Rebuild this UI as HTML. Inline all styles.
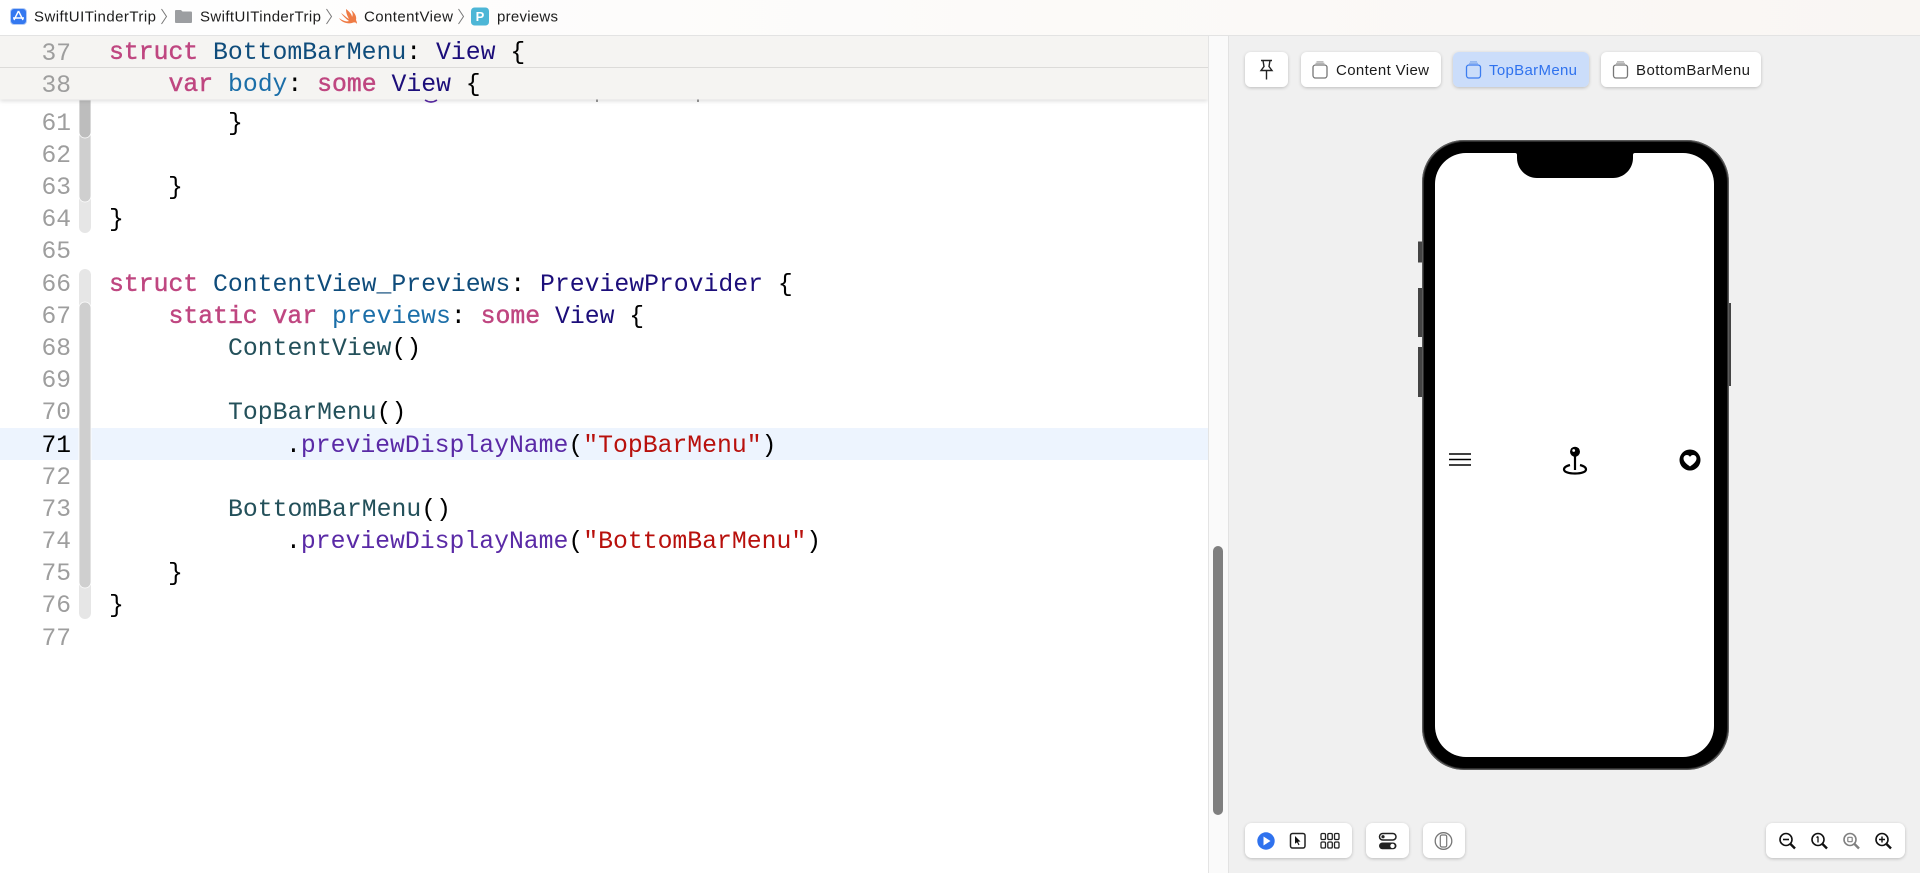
<!DOCTYPE html>
<html><head><meta charset="utf-8"><style>
html,body{margin:0;padding:0;background:#fff;width:1920px;height:873px;overflow:hidden}
svg{display:block;filter:blur(.3px)}
.c{font-family:"Liberation Mono",monospace;font-size:24.78px;fill:#000;white-space:pre}
.n{font-family:"Liberation Mono",monospace;font-size:24.6px;fill:#9e9e9e;text-anchor:end}
.u{font-family:"Liberation Sans",sans-serif;font-size:15px;fill:#1c1c1c}
.k{fill:#bf4680;stroke:#bf4680;stroke-width:.45}
.t{fill:#0f4c7b}.v{fill:#1c0e7a}.b{fill:#1b6ea8}.d{fill:#23505a}.m{fill:#5a2aa6}.s{fill:#b8100c}
</style></head><body>
<svg width="1920" height="873" viewBox="0 0 1920 873" xmlns="http://www.w3.org/2000/svg">
<defs>
<linearGradient id="top" x1="0" x2="1"><stop offset="0" stop-color="#fff"/><stop offset="1" stop-color="#f9f6f3"/></linearGradient>
<filter id="sh" x="-20%" y="-20%" width="140%" height="150%"><feDropShadow dx="0" dy="1" stdDeviation="1.5" flood-color="#000" flood-opacity=".22"/></filter>
<filter id="hs" x="0" y="0" width="100%" height="130%"><feDropShadow dx="0" dy="1.5" stdDeviation="2" flood-color="#000" flood-opacity=".14"/></filter>
</defs>

<!-- editor -->
<rect x="0" y="428" width="1208" height="32" fill="#edf4fe"/>
<g stroke="#fff" stroke-width=".8">
<path d="M79 100h12v127a6 6 0 0 1-12 0z" fill="#e6e6e6" stroke="none"/>
<path d="M79 100h12v96a6 6 0 0 1-12 0z" fill="#cfcfcf"/>
<path d="M79 100h12v32a6 6 0 0 1-12 0z" fill="#bdbdbd"/>
<path d="M79 275a6 6 0 0 1 12 0v338a6 6 0 0 1-12 0z" fill="#e6e6e6" stroke="none"/>
<path d="M79 308a6 6 0 0 1 12 0v274a6 6 0 0 1-12 0z" fill="#cfcfcf"/>
</g>

<g transform="translate(0,-1)">
<g class="n">
<text x="71" y="131">61</text><text x="71" y="163">62</text><text x="71" y="195">63</text>
<text x="71" y="227">64</text><text x="71" y="259">65</text><text x="71" y="292">66</text>
<text x="71" y="324">67</text><text x="71" y="356">68</text><text x="71" y="388">69</text>
<text x="71" y="420">70</text><text x="71" y="453" style="fill:#000">71</text><text x="71" y="485">72</text>
<text x="71" y="517">73</text><text x="71" y="549">74</text><text x="71" y="581">75</text>
<text x="71" y="613">76</text><text x="71" y="646">77</text>
</g>

<g class="c" xml:space="preserve">
<text x="228" y="131">}</text>
<text x="168" y="195">}</text>
<text x="109" y="227">}</text>
<text x="109" y="292"><tspan class="k">struct</tspan> <tspan class="t">ContentView_Previews</tspan>: <tspan class="v">PreviewProvider</tspan> {</text>
<text x="168.500" y="324"><tspan class="k">static</tspan> <tspan class="k">var</tspan> <tspan class="b">previews</tspan>: <tspan class="k">some</tspan> <tspan class="v">View</tspan> {</text>
<text x="228" y="356"><tspan class="d">ContentView</tspan>()</text>
<text x="228" y="420"><tspan class="d">TopBarMenu</tspan>()</text>
<text x="286" y="453">.<tspan class="m">previewDisplayName</tspan>(<tspan class="s">"TopBarMenu"</tspan>)</text>
<text x="228" y="517"><tspan class="d">BottomBarMenu</tspan>()</text>
<text x="286" y="549">.<tspan class="m">previewDisplayName</tspan>(<tspan class="s">"BottomBarMenu"</tspan>)</text>
<text x="168" y="581">}</text>
<text x="109" y="613">}</text>
</g>
</g>

<!-- sliver of hidden line -->
<path d="M425 100q6 4 12 0" stroke="#5a2aa6" stroke-width="1.600" fill="none"/>
<rect x="596" y="99" width="2" height="3" fill="#999"/>
<rect x="697" y="99" width="2" height="3" fill="#999"/>

<!-- sticky header -->
<g filter="url(#hs)"><rect x="0" y="35" width="1208" height="64.500" fill="#f5f4f2"/></g>
<rect x="0" y="67" width="1208" height="1" fill="#dcdbd9"/>
<rect x="0" y="35" width="1208" height="1" fill="#e2e1df"/>
<g transform="translate(0,-1)">
<g class="n"><text x="71" y="61">37</text><text x="71" y="93">38</text></g>
<g class="c" xml:space="preserve">
<text x="109" y="60"><tspan class="k">struct</tspan> <tspan class="t">BottomBarMenu</tspan>: <tspan class="v">View</tspan> {</text>
<text x="168.500" y="92"><tspan class="k">var</tspan> <tspan class="b">body</tspan>: <tspan class="k">some</tspan> <tspan class="v">View</tspan> {</text>
</g>
</g>

<!-- scrollbar -->
<rect x="1208" y="35" width="20" height="838" fill="#fafafa"/>
<rect x="1208" y="35" width="1" height="838" fill="#e4e4e4"/>
<rect x="1228" y="35" width="692" height="838" fill="#f0f0f0"/>
<rect x="1228" y="35" width="1" height="838" fill="#e2e2e2"/>
<rect x="1213" y="546" width="10" height="269" rx="5" fill="#7f7f7f"/>

<!-- breadcrumb -->
<rect x="0" y="0" width="1920" height="35" fill="url(#top)"/>
<rect x="0" y="35" width="1920" height="1" fill="#e3e3e3"/>
<rect x="10.500" y="8.500" width="16" height="16" rx="3.500" fill="#3478f0" stroke="#b6cdf5"/>
<path d="M18.500 11l-4.500 9M18.500 11l4.500 9M13 18h11" stroke="#fff" stroke-width="1.400" fill="none"/>
<text class="u" x="34" y="21.500" textLength="122" lengthAdjust="spacing">SwiftUITinderTrip</text>
<path d="M161.500 9l5 7.500-5 7.500" stroke="#777" fill="none"/>
<path d="M175 11a1 1 0 0 1 1-1h5l1.500 1.500h8.500a1 1 0 0 1 1 1v9.500a1 1 0 0 1-1 1h-15a1 1 0 0 1-1-1z" fill="#9c9ea1"/>
<text class="u" x="200" y="21.500" textLength="121" lengthAdjust="spacing">SwiftUITinderTrip</text>
<path d="M326.500 9l5 7.500-5 7.500" stroke="#777" fill="none"/>
<path d="M346 9c4 3 6 6 6 8 1-2 1-4-1-7 3 2 6 6 5 10 1 2 1 3 1 4-1-2-3-2-5-1-4 1-10 0-13-5 4 3 8 4 10 3-3-2-6-5-8-8 3 2 6 5 8 6-1-2-3-5-3-10z" fill="#ef7b45"/>
<text class="u" x="364" y="21.500" textLength="89" lengthAdjust="spacing">ContentView</text>
<path d="M458.500 9l5 7.500-5 7.500" stroke="#777" fill="none"/>
<rect x="471" y="7.500" width="18" height="18" rx="3.500" fill="#4db6d6"/>
<text x="480" y="21" text-anchor="middle" style="font:bold 13px 'Liberation Sans',sans-serif;fill:#fff">P</text>
<text class="u" x="497" y="21.500" textLength="61" lengthAdjust="spacing">previews</text>

<!-- preview top buttons -->
<g filter="url(#sh)">
<rect x="1245" y="52" width="43" height="35" rx="6" fill="#fff"/>
<rect x="1301" y="52" width="140" height="35" rx="6" fill="#fff"/>
<rect x="1453" y="52" width="136" height="35" rx="6" fill="#cbddfa"/>
<rect x="1601" y="52" width="160" height="35" rx="6" fill="#fff"/>
</g>
<path d="M1261 60.500h11M1263 60.500l1 6-3 4h11l-3-4 1-6M1266.500 70.500v9" stroke="#222" stroke-width="1.400" fill="none"/>
<g fill="none" stroke-width="1.300">
<g stroke="#777"><rect x="1313" y="65" width="14" height="13" rx="2.500"/><path d="M1315.500 63.400h9M1316.500 61.800h7" stroke="#b4b4b4"/></g>
<g stroke="#3c7df0"><rect x="1466.500" y="65" width="14" height="13" rx="2.500"/><path d="M1469 63.400h9M1470 61.800h7" stroke="#8fb3ef"/></g>
<g stroke="#777"><rect x="1613.500" y="65" width="14" height="13" rx="2.500"/><path d="M1616 63.400h9M1617 61.800h7" stroke="#b4b4b4"/></g>
</g>
<text class="u" x="1336" y="75" textLength="93" lengthAdjust="spacing">Content View</text>
<text class="u" x="1489" y="75" textLength="88" lengthAdjust="spacing" style="fill:#2f72ee">TopBarMenu</text>
<text class="u" x="1636" y="75" textLength="114" lengthAdjust="spacing">BottomBarMenu</text>

<!-- phone -->
<rect x="1418" y="241.500" width="5" height="21" fill="#444"/>
<rect x="1418" y="288" width="5" height="49" fill="#444"/>
<rect x="1418" y="347" width="5" height="50" fill="#444"/>
<rect x="1727" y="303" width="4" height="83" fill="#444"/>
<rect x="1423" y="141" width="305" height="628" rx="41" fill="#000" stroke="#2e2e2e" stroke-width="2"/>
<rect x="1422.500" y="140.500" width="306" height="629" rx="42" fill="none" stroke="#666" stroke-width=".8"/>
<rect x="1435" y="153" width="279" height="604" rx="31" fill="#fff"/>
<path d="M1513 153h2a2 2 0 0 1 2 2v3c0 11 9 20 20 20h76c11 0 20-9 20-20v-3a2 2 0 0 1 2-2h2v-1h-124z" fill="#000"/>

<!-- phone content -->
<path d="M1449 454h22M1449 459.500h22M1449 465h22" stroke="#000" stroke-width="1.500"/>
<circle cx="1575" cy="451.700" r="5" fill="#000"/>
<circle cx="1573.700" cy="450.500" r="1.400" fill="#fff"/>
<path d="M1575 455v15" stroke="#000" stroke-width="2.200"/>
<path d="M1570 465c-4 1-6 2.500-6 4.500 0 2.500 5 4 11 4s11-1.500 11-4c0-2-2-3.500-6-4.500" fill="none" stroke="#000" stroke-width="2.200"/>
<circle cx="1690" cy="460" r="10.500" fill="#000"/>
<path d="M1690 466.500c-1-1-6.500-4-6.500-8 0-2 1.500-3.500 3.300-3.500 1.400 0 2.600.8 3.200 2 .6-1.200 1.800-2 3.200-2 1.800 0 3.300 1.500 3.300 3.500 0 4-5.500 7-6.500 8z" fill="#fff"/>

<!-- bottom toolbar -->
<g filter="url(#sh)">
<rect x="1245" y="823" width="107" height="35" rx="7" fill="#fff"/>
<rect x="1366" y="823" width="43" height="35" rx="7" fill="#fff"/>
<rect x="1423" y="823" width="42" height="35" rx="7" fill="#fff"/>
<rect x="1766" y="823" width="139" height="35" rx="7" fill="#fff"/>
</g>
<circle cx="1266" cy="841" r="8.700" fill="#2f72ee"/>
<path d="M1263.500 836.500l7 4.500-7 4.500z" fill="#fff"/>
<rect x="1290.500" y="833.500" width="14.500" height="14.500" rx="2" fill="none" stroke="#222" stroke-width="1.500"/>
<path d="M1295 836l5.500 5.500-2.500.3 1.500 3-1 .5-1.500-3-2 1.500z" fill="#111"/>
<g fill="none" stroke="#222" stroke-width="1.300">
<rect x="1321" y="833.500" width="4.500" height="6" rx="1.300"/><rect x="1327.800" y="833.500" width="4.500" height="6" rx="1.300"/><rect x="1334.500" y="833.500" width="4.500" height="6" rx="1.300"/>
<rect x="1321" y="842" width="4.500" height="6" rx="1.300"/><rect x="1327.800" y="842" width="4.500" height="6" rx="1.300"/><rect x="1334.500" y="842" width="4.500" height="6" rx="1.300"/>
</g>
<rect x="1379.500" y="833.500" width="16.500" height="6.500" rx="3.250" fill="#fff" stroke="#222" stroke-width="1.500"/>
<circle cx="1383" cy="836.700" r="1.600" fill="#222"/>
<rect x="1379" y="842.500" width="17.500" height="6.800" rx="3.400" fill="#222"/>
<circle cx="1392.500" cy="845.900" r="2.200" fill="#fff"/>
<circle cx="1443.500" cy="841" r="8.300" fill="none" stroke="#777" stroke-width="1.300"/>
<rect x="1440.300" y="835" width="6.400" height="12" rx="1.600" fill="none" stroke="#777" stroke-width="1.200"/>

<g fill="none" stroke="#111" stroke-width="1.600" transform="translate(0,.5)">
<circle cx="1786" cy="839" r="6"/><path d="M1790.500 843.500l4.500 4.500" stroke-width="2.400"/><path d="M1783 839h6"/>
<circle cx="1818" cy="839" r="6"/><path d="M1822.500 843.500l4.500 4.500" stroke-width="2.400"/><path d="M1818 836v6M1816.500 837l1.500-1" stroke-width="1.300"/>
<g stroke="#808080"><circle cx="1850" cy="839" r="6"/><path d="M1854.500 843.500l4.500 4.500" stroke-width="2.400"/><rect x="1847.800" y="836.800" width="4.400" height="4.400" rx=".8" stroke-width="1.200"/></g>
<circle cx="1882" cy="839" r="6"/><path d="M1886.500 843.500l4.500 4.500" stroke-width="2.400"/><path d="M1879 839h6M1882 836v6" stroke-width="1.400"/>
</g>
</svg>
</body></html>
